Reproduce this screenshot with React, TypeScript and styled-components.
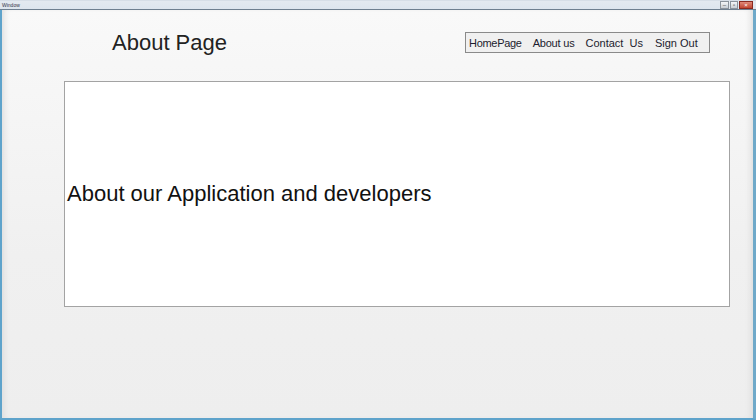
import React from "react";
import styled, { createGlobalStyle } from "styled-components";

const Global = createGlobalStyle`
  html, body { margin: 0; padding: 0; background: #f0f0f0; }
  * { box-sizing: border-box; }
`;

const Window = styled.div`
  width: 756px;
  height: 420px;
  display: flex;
  flex-direction: column;
  font-family: "Liberation Sans", Arial, sans-serif;
  overflow: hidden;
  background: #dfe6ee;
`;

const TitleBar = styled.div`
  height: 10px;
  display: flex;
  align-items: center;
  padding: 0 3px 0 2px;
  background: linear-gradient(#c9d3de 0px, #e3e9f0 1px, #dde5ee 100%);
  border-bottom: 1px solid #6e7f90;
`;

const TitleText = styled.span`
  font-size: 5px;
  line-height: 6px;
  color: #334;
  letter-spacing: 0;
`;

const Controls = styled.div`
  margin-left: auto;
  display: flex;
  gap: 1px;
  height: 8px;
`;

const Ctrl = styled.div<{ $close?: boolean; $w: number }>`
  width: ${(p) => p.$w}px;
  height: 8px;
  border: 1px solid ${(p) => (p.$close ? "#8a2a20" : "#8a939c")};
  background: ${(p) =>
    p.$close ? "linear-gradient(#e08a7a, #c0442f)" : "linear-gradient(#f4f6f8, #c8ced4)"};
  display: flex;
  align-items: center;
  justify-content: center;
  font-size: 6px;
  line-height: 6px;
  color: ${(p) => (p.$close ? "#fff" : "#333")};
`;

const Body = styled.div`
  flex: 1;
  display: flex;
  flex-direction: column;
  border-left: 2px solid #5ea3cb;
  border-right: 3px solid #6fa9c9;
  border-bottom: 2px solid #5ea3cb;
  background: linear-gradient(#f9f9f9, #f0f0f0 60%, #eeeeee);
  box-shadow: inset 6px 0 6px -4px #dcdcdc, inset -6px 0 6px -4px #dcdcdc;
`;

const Header = styled.div`
  display: flex;
  align-items: flex-start;
  margin-top: 18px;
  padding-left: 110px;
  padding-right: 43px;
`;

const PageTitle = styled.h1`
  margin: 2px 0 0;
  font-size: 22px;
  line-height: 25px;
  font-weight: normal;
  color: #222;
`;

const Nav = styled.nav`
  margin-left: auto;
  margin-top: 4px;
  width: 245px;
  height: 21px;
  border: 1px solid #8a8a8a;
  display: flex;
  align-items: center;
  padding-left: 3px;
  background: #f0f0f0;
`;

const NavItem = styled.span<{ $gap: number; $spacing?: number }>`
  margin-left: ${(p) => p.$gap}px;
  font-size: 11px;
  color: #1c1c2e;
  white-space: pre;
  letter-spacing: ${(p) => p.$spacing ?? 0}px;
`;

const Panel = styled.div`
  margin-top: 26px;
  margin-left: 62px;
  width: 666px;
  height: 226px;
  background: #ffffff;
  border: 1px solid #a3a3a3;
  display: flex;
  align-items: center;
  padding-left: 2px;
`;

const PanelText = styled.p`
  margin: 0;
  font-size: 22px;
  color: #111;
`;

export default function App() {
  return (
    <>
      <Global />
      <Window>
        <TitleBar>
          <TitleText>Window</TitleText>
          <Controls>
            <Ctrl $w={9}>–</Ctrl>
            <Ctrl $w={8}>▫</Ctrl>
            <Ctrl $w={14} $close>×</Ctrl>
          </Controls>
        </TitleBar>
        <Body>
          <Header>
            <PageTitle>About Page</PageTitle>
            <Nav>
              <NavItem $gap={0} $spacing={-0.3}>HomePage</NavItem>
              <NavItem $gap={11} $spacing={-0.2}>About us</NavItem>
              <NavItem $gap={11}>Contact  Us</NavItem>
              <NavItem $gap={12}>Sign Out</NavItem>
            </Nav>
          </Header>
          <Panel>
            <PanelText>About our Application and developers</PanelText>
          </Panel>
        </Body>
      </Window>
    </>
  );
}
